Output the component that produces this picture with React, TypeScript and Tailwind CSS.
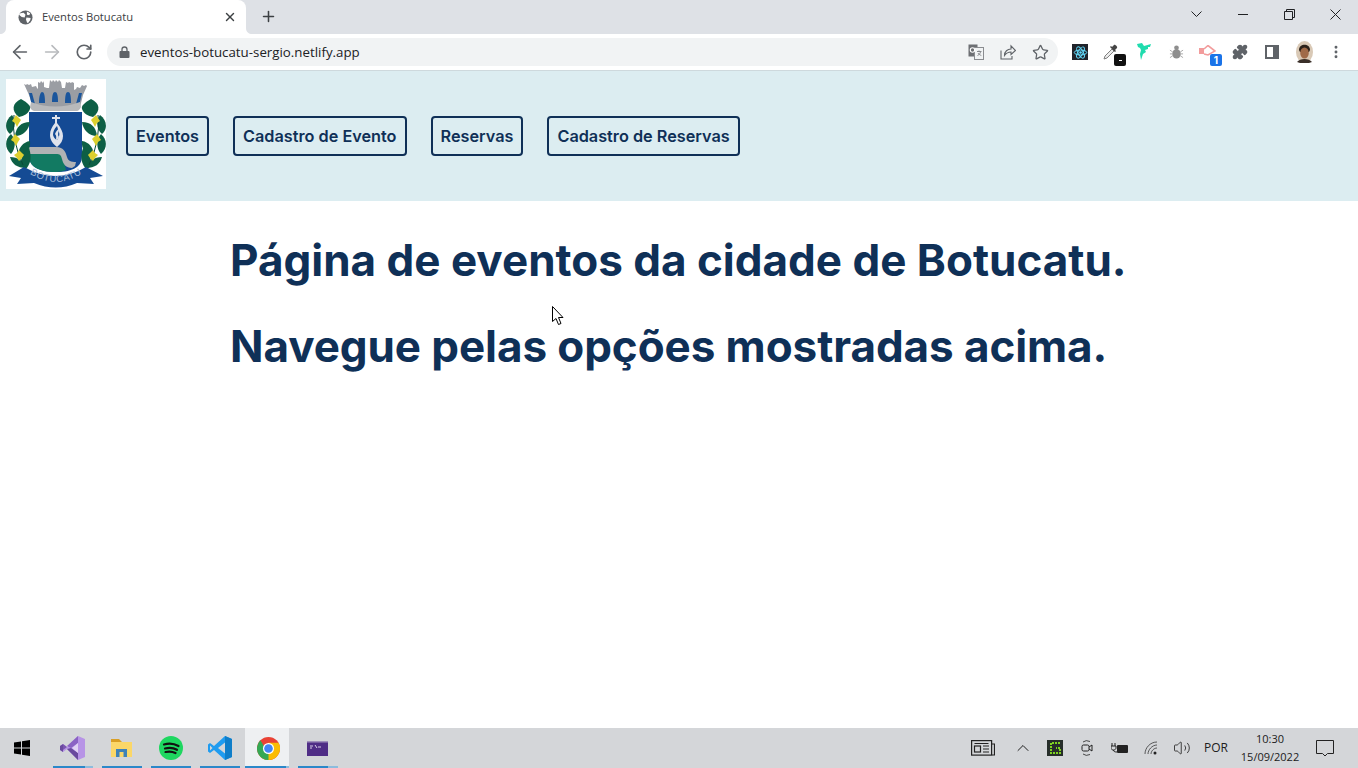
import React from "react";
import { ArrowLeft, ArrowRight, RotateCw, Star, Puzzle, X, Plus, MoreVertical, ChevronUp, Volume2 } from "lucide-react";

function Globe() {
  return (
    <svg width="15" height="15" viewBox="0 0 16 16">
      <circle cx="8" cy="8" r="7.500" fill="#5f6368" />
      <path d="M2.500 3.500l3.500-.5 2 2-1 3-3-.5-3-2.500zM9.500 1.500l3.500 2-1 2-2.500-.5zM9 8l4.500.5-.5 2.500-2.500 3-1-1-1-3z" fill="#fff" />
    </svg>
  );
}

function LaurelSide() {
  return (
    <g>
      <g fill="#0d5f45">
        <path d="M13 38C5 32 6 24 15 20 22 24 25 27 24 30 22 35 18 37 13 38z" />
        <path d="M6 36C-1 41-2 50 4 55 10 50 10 42 6 36z" />
        <path d="M9 57C10 48 15 43 24 43 23 51 17 57 9 57z" />
        <path d="M5 55C-1 60-2 69 5 75 10 69 10 61 5 55z" />
        <path d="M12 77C12 69 17 63 24 62 25 69 21 76 12 77z" />
        <path d="M4 78C6 85 11 89 20 89 18 82 12 78 4 78z" />
        <path d="M19 91C13 84 14 76 23 69 26 78 25 85 19 91z" />
      </g>
      <path d="M8 36Q5 60 17 86" fill="none" stroke="#0b4a38" strokeWidth="1" />
      <g fill="#dccf2e">
        <path d="M10 36l3 3 2 2-2 3-2 4-2-4-3-2 2-3z" />
        <path d="M9 55l3 3 2 2-2 3-2 4-2-4-3-2 2-3z" />
        <path d="M13 71l3 3 2 2-2 3-3 3-2-3-3-3 3-2z" />
      </g>
    </g>
  );
}

function Crest() {
  return (
    <svg width="100" height="110" viewBox="0 0 100 110" className="bg-white shrink-0">
      <path d="M18 5l2 1 1-1 2 1 2-1 1 3 4-1 1 2 1 1 0-7 2 1 1-2 2 2 1-2 0 6 3 1 2 0 1-8 2 2 1-2 2 2 1-2 2 2 1-2 2 2 1 6 3 0 1-6 2 1 1-1 2 1 1-1 2 1 0 7 2-1 1-2 3 1 2-3 2 1 2-1 1 1-4 9-3 12-47 0-4-12z" fill="#9a9da3" />
      <path d="M33 24c0-8 2-11 3-11 2 0 3 3 3 11zM46 23c0-7 1-10 3-10s3 3 3 10zM59 24c0-8 1-11 3-11s3 3 3 11zM23 14l3 0 3 11-3 2zM76 14l-3 0-3 11 3 2z" fill="#1a559c" />
      <path d="M25 23q24 9 49 0l1 5q-2 4-4 4l-43 0q-3-1-4-4z" fill="#b8b9bb" />
      <path d="M23 33l53 0 0 44c0 10-8 16-26 16s-27-6-27-16z" fill="#144a94" />
      <path d="M23 73l25 0c9 0 9 6 11 13l1 5c-3 1-6 2-10 2-18 0-27-6-27-16z" fill="#127a62" />
      <path d="M23 68l27 0c8 0 10 6 11 10 1 4 4 5 9 5l-1 4-3 2c-6 0-9-4-10-9-1-4-2-5-6-5l-27 0z" fill="#b0b2b4" />
      <path d="M49 36h2v2h3v2h-3v4c4 5 6 9 6 13s-2 8-6 11c-4-3-7-7-7-12s2-8 5-12v-4h-3v-2h3z" fill="#dfe3ec" />
      <path d="M51 47c-3 3-4 6-4 9 1 3 2 4 4 5 2-3 3-5 2-8-1-1-1-4-2-6z" fill="#144a94" />
      <path d="M49 55c1-3 3-5 4-5 0 3-2 5 0 8-1 2-2 3-3 3 0-2 1-4-1-6z" fill="#dfe3ec" />
      <LaurelSide />
      <g transform="translate(100 0) scale(-1 1)"><LaurelSide /></g>
      <path d="M3 97L18 88Q50 106 80 88L97 97 84 99 88 105 71 104Q50 113 28 104L11 105 15 99z" fill="#154b94" />
      <path id="crest-arc" d="M20 92Q50 114 80 92" fill="none" />
      <text fontSize="9.500" fontFamily="Liberation Sans, sans-serif" fill="#a9bedb" letterSpacing=".5">
        <textPath href="#crest-arc" startOffset="50%" textAnchor="middle">BOTUCATU</textPath>
      </text>
    </svg>
  );
}

function Ext({ children }: { children: React.ReactNode }) {
  return <div className="relative h-[24px] w-[32px] flex items-center justify-center">{children}</div>;
}

function TaskIcon({ children, active, light = 0 }: { children: React.ReactNode; active?: boolean; light?: number }) {
  return (
    <div className="relative h-10 w-[49px] flex items-center justify-center">
      {active && <div className="absolute left-[1px] right-[4px] inset-y-0 bg-[#eef0f2]" />}
      <div className="relative">{children}</div>
      <div className={`absolute bottom-0 h-[2px] flex right-[4px] ${active ? "left-[1px]" : "left-[5px]"}`}>
        <div className="flex-1 bg-[#2b88c9]" />
        {light > 0 && <div className="bg-[#8cbcdd]" style={{ width: light }} />}
      </div>
    </div>
  );
}

function Cell({ w, children }: { w: string; children: React.ReactNode }) {
  return <div className={`${w} flex items-center justify-center`}>{children}</div>;
}

export default function App() {
  return (
    <div className="h-screen w-full flex flex-col overflow-hidden bg-white font-['Inter',sans-serif] relative">
      {/* tab strip */}
      <div className="h-[34px] bg-[#dee1e6] flex items-end shrink-0 pl-[6px] font-['Open_Sans',sans-serif]">
        <div className="relative h-[34px] w-[240px] bg-white rounded-t-[8px] flex items-center pl-[12px] pr-[9px]">
          <svg width="6" height="6" viewBox="0 0 6 6" className="absolute left-[-6px] bottom-0"><path d="M6 0v6H0c3 0 6-2 6-6z" fill="#fff" /></svg>
          <svg width="6" height="6" viewBox="0 0 6 6" className="absolute right-[-6px] bottom-0"><path d="M0 0v6h6C3 6 0 4 0 0z" fill="#fff" /></svg>
          <Globe />
          <span className="ml-[9px] text-[11.200px] text-[#3c4043] flex-1">Eventos Botucatu</span>
          <X size={14} strokeWidth={2.4} className="text-[#3c4043]" />
        </div>
        <Plus size={17} strokeWidth={2.2} className="text-[#3c4043] ml-[14px] mb-[9px]" />
        <div className="flex-1" />
        <div className="flex self-start h-[28px] items-stretch text-[#202124]">
          <Cell w="w-[48px]"><svg width="11" height="7" viewBox="0 0 11 7" fill="none" stroke="#202124"><path d="M.5.500l5 5 5-5" /></svg></Cell>
          <Cell w="w-[46px]"><svg width="10" height="1" viewBox="0 0 10 1"><path d="M0 0h10v1H0z" fill="#202124" /></svg></Cell>
          <Cell w="w-[46px]"><svg width="11" height="11" viewBox="0 0 11 11" fill="none" stroke="#202124"><path d="M.5 2.500h8v8h-8zM2.500 2.500v-2h8v8h-2" /></svg></Cell>
          <Cell w="w-[46px]"><svg width="11" height="11" viewBox="0 0 11 11" fill="none" stroke="#202124"><path d="M.5.500l10 10M10.500.500l-10 10" /></svg></Cell>
        </div>
      </div>
      {/* toolbar */}
      <div className="h-[37px] bg-white flex items-center shrink-0 border-b border-[#ced9dd]">
        <div className="flex items-center pl-[4px] text-[#5f6368]">
          <Cell w="w-[32px]"><ArrowLeft size={22} strokeWidth={1.7} /></Cell>
          <Cell w="w-[32px]"><ArrowRight size={22} strokeWidth={1.7} className="text-[#b8babd]" /></Cell>
          <Cell w="w-[32px]"><RotateCw size={18} strokeWidth={2.2} /></Cell>
        </div>
        <div className="ml-[7px] w-[951px] h-[28px] rounded-full bg-[#f1f3f4] flex items-center pl-[12px] pr-[10px] font-['Open_Sans',sans-serif]">
          <svg width="11" height="12" viewBox="0 0 11 12" fill="#5f6368"><path d="M1.500 5h8a1 1 0 0 1 1 1v5a1 1 0 0 1-1 1h-8a1 1 0 0 1-1-1V6a1 1 0 0 1 1-1z" /><path d="M3 5V3.500a2.500 2.500 0 0 1 5 0V5" fill="none" stroke="#5f6368" strokeWidth="1.300" /></svg>
          <span className="ml-[10px] mt-[1px] text-[13.300px] text-[#202124] flex-1">eventos-botucatu-sergio.netlify.app</span>
          <div className="flex items-center gap-[16px] text-[#5f6368]">
            <svg width="16" height="16" viewBox="0 0 16 16"><rect x="0.500" y="0.500" width="9" height="12" fill="#6d6f73" /><rect x="6.500" y="3.500" width="9" height="12" fill="#f1f3f4" stroke="#8a8c90" /><circle cx="4.500" cy="6" r="2.200" fill="none" stroke="#fff" strokeWidth="1.100" /><path d="M9 7.500h4.500M11 6.500v1M12.500 8c-.5 2-2 3-3 3.500M10 9c.5 1 2 2 3.300 2.500" stroke="#6d6f73" strokeWidth=".8" fill="none" /></svg>
            <svg width="16" height="16" viewBox="0 0 16 16" fill="none" stroke="#5f6368" strokeWidth="1.100"><path d="M1 6.500V15h11v-3" /><path d="M4.500 11.500C4.500 7.500 7.500 5 11 5V1.800L15.500 6.500 11 10.500V8C8.500 8 6 9.500 4.500 11.500z" /></svg>
            <Star size={17} strokeWidth={1.8} className="mx-[-0.5px]" />
          </div>
        </div>
        <div className="flex items-center ml-[6px]">
          <Ext>
            <div className="w-[16px] h-[16px] bg-[#20232a] flex items-center justify-center">
              <svg width="15" height="15" viewBox="0 0 24 24" fill="none" stroke="#61dafb" strokeWidth="1.600"><circle cx="12" cy="12" r="2" fill="#61dafb" stroke="none" /><ellipse cx="12" cy="12" rx="10" ry="4" /><ellipse cx="12" cy="12" rx="10" ry="4" transform="rotate(60 12 12)" /><ellipse cx="12" cy="12" rx="10" ry="4" transform="rotate(120 12 12)" /></svg>
            </div>
          </Ext>
          <Ext>
            <svg width="16" height="16" viewBox="0 0 16 16" className="relative left-[-1px]"><path d="M1 15l1-3 7-7 2 2-7 7z" fill="#ececec" stroke="#808080" /><path d="M9 3l2-2c1-1 4 2 3 3l-2 2 1 1-1 1-5-5 1-1z" fill="#444" /></svg>
            <div className="absolute left-[18px] top-[14px] w-[12px] h-[12px] bg-[#111] rounded-[2px] flex items-center justify-center"><div className="w-[3px] h-[1px] bg-white" /></div>
          </Ext>
          <Ext>
            <svg width="15" height="18" viewBox="0 0 15 18"><path d="M0 1L5 0 7 3 14 1 13 4 11 4 11 6 8 7 9 9 6 11 4 17 3 11 4 7 3 5 1 4z" fill="#1fdcae" /></svg>
          </Ext>
          <Ext>
            <svg width="15" height="16" viewBox="0 0 16 16" fill="#8e8e8e" stroke="#a8a8a8"><ellipse cx="8" cy="10" rx="4.500" ry="5" stroke="none" /><circle cx="8" cy="3.500" r="2.500" stroke="none" /><path d="M1 6l3 2M1 10h3M1 14l3-2M15 6l-3 2M15 10h-3M15 14l-3-2" fill="none" /></svg>
          </Ext>
          <Ext>
            <svg width="17" height="15" viewBox="0 0 17 15" fill="none" className="relative left-[-1px]"><rect x="0" y="3" width="5" height="6" fill="#f29c9c" /><path d="M5 4L9 .500 16 6 9 10 5 9" stroke="#f29c9c" strokeWidth="1.600" /></svg>
            <div className="absolute left-[18px] top-[14px] w-[12px] h-[12px] bg-[#1a73e8] rounded-[2px] text-white text-[10px] font-bold leading-[12px] text-center">1</div>
          </Ext>
          <Ext><Puzzle size={16} fill="#5f6368" className="text-[#5f6368]" /></Ext>
          <Ext>
            <svg width="14" height="14" viewBox="0 0 14 14"><rect width="14" height="14" fill="#5f6368" /><rect x="2" y="2" width="6" height="10" fill="#fff" /></svg>
          </Ext>
          <Ext>
            <svg width="17" height="22" viewBox="0 0 17 22"><ellipse cx="8.500" cy="11" rx="8.500" ry="11" fill="#d9c9b6" /><path d="M3 9c0-7 11-7 11 0l-1 2-9 0z" fill="#2b2119" /><ellipse cx="8.500" cy="12" rx="4.300" ry="5.500" fill="#a06a48" /><path d="M1 21c3-4 12-4 15 0l-3 1-9 0z" fill="#3a2f28" /></svg>
          </Ext>
          <Ext><MoreVertical size={16} strokeWidth={2.4} className="text-[#5f6368]" /></Ext>
        </div>
      </div>
      {/* page header */}
      <header className="h-[130px] bg-[#dcedf1] flex items-start pl-[6px] pt-[8px] shrink-0">
        <Crest />
        <nav className="flex items-center gap-[24px] ml-[20px] mt-[37px]">
          {["Eventos", "Cadastro de Evento", "Reservas", "Cadastro de Reservas"].map((t) => (
            <a key={t} className="h-[40px] px-[8px] flex items-center border-2 border-[#0f3057] rounded-[4px] text-[#0f3057] text-[16.250px] font-semibold">{t}</a>
          ))}
        </nav>
      </header>
      {/* content */}
      <main className="flex-1 pl-[230px] pt-[33px] text-[#0f3057]">
        <h1 className="text-[44px] leading-[53px] font-bold">Página de eventos da cidade de Botucatu.</h1>
        <h1 className="text-[44px] leading-[53px] font-bold mt-[33px] tracking-[-0.08px]">Navegue pelas opções mostradas acima.</h1>
      </main>
      {/* taskbar */}
      <div className="h-[40px] bg-[#d4d6d9] flex items-center shrink-0 font-['Open_Sans',sans-serif]">
        <div className="w-[44px] mr-[4px] flex items-center justify-center">
          <svg width="16" height="16" viewBox="0 0 16 16" fill="#000"><path d="M0 2.500l7-1v6H0zM8 1.300L16 0v7.500H8zM0 8.500h7v6l-7-1zM8 8.500h8V16l-8-1.200z" /></svg>
        </div>
        <TaskIcon light={8}>
          <svg width="25" height="24" viewBox="0 0 25 24"><path d="M18 0l7 3v18l-7 3L7 13l-4 3-3-2V10l3-2 4 3z" fill="#b794e6" /><path d="M18 0v7l-7 5-4-2z" fill="#8a62c4" /><path d="M3 8l4 3-4 3z" fill="#7a55b0" /><path d="M0 10l3-2v8l-3-2zM7 13l4-1 7 5v7z" fill="#6a4a9e" /><path d="M18 7l-6 5 6 5z" fill="#e0d2f4" /></svg>
        </TaskIcon>
        <TaskIcon>
          <svg width="21" height="18" viewBox="0 0 21 18"><path d="M0 0h8l3 3H0z" fill="#d99f25" /><rect y="3" width="21" height="15" fill="#fbd768" /><rect x="5" y="10" width="11" height="8" fill="#3f82b8" /><rect x="8.500" y="13" width="4" height="5" fill="#fbd768" /></svg>
        </TaskIcon>
        <TaskIcon>
          <svg width="24" height="24" viewBox="0 0 24 24"><circle cx="12" cy="12" r="12" fill="#1ed760" /><path d="M5 8.500c5-1.500 10-1 14.500 1.500M6 12.500c4-1 8.500-.7 12 1.300M6.500 16c3.500-.8 7-.5 10 1" stroke="#111" strokeWidth="2.200" strokeLinecap="round" fill="none" /></svg>
        </TaskIcon>
        <TaskIcon>
          <svg width="24" height="24" viewBox="0 0 24 24"><path d="M17 0l7 3v18l-7 3-11-10-4 3-2-1.500V8.500L2 7l4 3z" fill="#1f9cf0" /><path d="M17 0l7 3v18l-7 3z" fill="#0f7ec9" /><path d="M17 6.500l-7 5.500 7 5.500z" fill="#d4d6d9" /><path d="M2 9.500v5l2.500-2.500z" fill="#d4d6d9" /></svg>
        </TaskIcon>
        <TaskIcon active light={3}>
          <svg width="23" height="23" viewBox="0 0 24 24"><circle cx="12" cy="12" r="12" fill="#e94235" /><path d="M12 24A12 12 0 0 0 22.400 6H12l-5 9-4.500 4A12 12 0 0 0 12 24z" fill="#fbbc04" /><path d="M12 24A12 12 0 0 1 1.600 18 12 12 0 0 1 3.500 3.500L7 9l5 9z" fill="#34a853" /><circle cx="12" cy="12" r="5.800" fill="#fff" /><circle cx="12" cy="12" r="4.500" fill="#4285f4" /></svg>
        </TaskIcon>
        <TaskIcon light={10}>
          <svg width="21" height="15" viewBox="0 0 21 15"><rect width="21" height="15" fill="#4f2d86" /><rect width="21" height="1.500" fill="#9f90bb" /><path d="M3 5h3M3 7h2M8 4l2 3M11 6h3" stroke="#d9d0e8" strokeWidth="1" /></svg>
        </TaskIcon>
        <div className="flex-1" />
        <div className="flex items-center text-[#202020] h-full pr-[14px]">
          <Cell w="w-[48px]"><svg width="24" height="16" viewBox="0 0 24 16" fill="none" stroke="#222" strokeWidth="1.200"><rect x=".6" y=".6" width="20" height="14.500" /><path d="M21 4h2.500v11H21" /><rect x="3.500" y="6" width="6" height="6" /><path d="M3.500 3.500h14M12 6h6M12 9h6M12 12h6" /></svg></Cell>
          <Cell w="w-[32px]"><ChevronUp size={20} strokeWidth={1.2} /></Cell>
          <Cell w="w-[32px]">
            <div className="w-[16px] h-[16px] bg-[#262e2a] flex items-center justify-center">
              <svg width="14" height="14" viewBox="0 0 14 14" fill="none" stroke="#7ed321" strokeWidth="2" strokeDasharray="2 1"><path d="M12 2H3v10h9V7H8" /></svg>
            </div>
          </Cell>
          <Cell w="w-[32px]">
            <svg width="13" height="18" viewBox="0 0 13 18" fill="none" stroke="#222"><path d="M2 3Q5 .500 9 2.500M2 15Q5 17.500 9 15.500" strokeWidth=".8" /><rect x="1" y="6" width="7" height="6" rx="1.500" /><path d="M8 8l3-2v6l-3-2" /></svg>
          </Cell>
          <Cell w="w-[33px]">
            <svg width="17" height="11" viewBox="0 0 17 11"><rect x="6" y="2" width="11" height="8" rx="1" fill="#222" /><path d="M1 0v3M4 0v3M0 3h5v2c0 1-1 2-2.500 2S0 6 0 5zM2.500 7c0 1.500 1 2 3.500 2" stroke="#222" fill="none" /></svg>
          </Cell>
          <Cell w="w-[30px]">
            <svg width="14" height="14" viewBox="0 0 14 14" fill="none" stroke="#222" strokeWidth="1"><path d="M1 13C1 7 6 1 13 1M4 13c0-4 4-9 9-9M7 13c0-3 3-6 6-6" opacity=".7" /><circle cx="11" cy="12" r="1.500" fill="#222" stroke="none" /></svg>
          </Cell>
          <Cell w="w-[32px]"><Volume2 size={18} strokeWidth={1.1} /></Cell>
          <Cell w="w-[36px]"><span className="text-[12px]">POR</span></Cell>
          <div className="w-[72px] text-[11px] leading-[18px] text-center">
            <div>10:30</div>
            <div>15/09/2022</div>
          </div>
          <Cell w="w-[38px]">
            <svg width="18" height="18" viewBox="0 0 18 18" fill="none" stroke="#222"><path d="M.5 1.500h17v13h-6l-2.500 2.500-2.500-2.500h-6z" /></svg>
          </Cell>
        </div>
      </div>
      {/* mouse pointer */}
      <svg width="14" height="21" viewBox="0 0 14 21" className="absolute left-[551px] top-[305px]"><path d="M1.500 1.500v15l3.500-3 2.500 6 2.500-1-2.500-6h4.500z" fill="#fff" stroke="#000" /></svg>
    </div>
  );
}
